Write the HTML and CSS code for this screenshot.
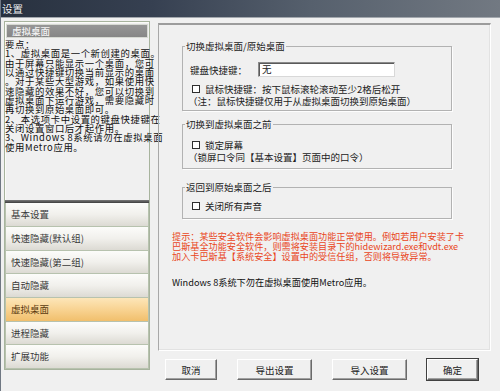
FILE: index.html
```html
<!DOCTYPE html>
<html lang="zh-CN">
<head>
<meta charset="utf-8">
<title>设置</title>
<link rel="stylesheet" href="styles.css">
</head>
<body>
<div class="window">
  <div class="titlebar"><span class="title">设置</span></div>
  <div class="main">
    <div class="side">
      <div class="side-head">虚拟桌面</div>
      <div class="side-text">要点：<br>1、虚拟桌面是一个新创建的桌面。<br>由于屏幕只能显示一个桌面，您可<br>以通过快捷键切换当前显示的桌面<br>。对于某些大型游戏，如果使用快<br>速隐藏的效果不好，您可以切换到<br>虚拟桌面下运行游戏，需要隐藏时<br>再切换到原始桌面即可。<br>2、本选项卡中设置的键盘快捷键在<br>关闭设置窗口后才起作用。<br>3、Windows 8系统请勿在虚拟桌面<br>使用Metro应用。</div>
      <div class="side-sep"></div>
      <ul class="menu">
        <li class="item">基本设置</li>
        <li class="item">快速隐藏(默认组)</li>
        <li class="item">快速隐藏(第二组)</li>
        <li class="item">自动隐藏</li>
        <li class="item active">虚拟桌面</li>
        <li class="item">进程隐藏</li>
        <li class="item">扩展功能</li>
      </ul>
    </div>
    <div class="right">
      <div class="panel">
        <div class="group g1">
          <span class="legend">切换虚拟桌面/原始桌面</span>
          <div class="row-key"><span class="key-label">键盘快捷键：</span><span class="input">无</span></div>
          <div class="row-check"><span class="box"></span><span>鼠标快捷键：按下鼠标滚轮滚动至少2格后松开</span></div>
          <div class="row-note">（注：鼠标快捷键仅用于从虚拟桌面切换到原始桌面）</div>
        </div>
        <div class="group g2">
          <span class="legend">切换到虚拟桌面之前</span>
          <div class="row-check"><span class="box"></span><span>锁定屏幕</span></div>
          <div class="row-note">（锁屏口令同【基本设置】页面中的口令）</div>
        </div>
        <div class="group g3">
          <span class="legend">返回到原始桌面之后</span>
          <div class="row-check"><span class="box"></span><span>关闭所有声音</span></div>
        </div>
        <div class="tip">提示：某些安全软件会影响虚拟桌面功能正常使用。例如若用户安装了卡<br>巴斯基全功能安全软件，则需将安装目录下的hidewizard.exe和vdt.exe<br>加入卡巴斯基【系统安全】设置中的受信任组，否则将导致异常。</div>
        <div class="win8">Windows 8系统下勿在虚拟桌面使用Metro应用。</div>
      </div>
      <div class="buttons">
        <button class="btn w-s">取消</button>
        <button class="btn w-l">导出设置</button>
        <button class="btn w-l">导入设置</button>
        <button class="btn w-s default">确定</button>
      </div>
    </div>
  </div>
</div>
</body>
</html>
```

FILE: styles.css
```css
* { box-sizing: border-box; }
html, body {
  margin: 0;
  padding: 0;
  width: 500px;
  height: 391px;
  overflow: hidden;
  background: #f0f0f0;
  font-family: "Noto Sans CJK SC", "Noto Sans", sans-serif;
  color: #000;
}
.window {
  width: 500px;
  height: 391px;
  border-left: 1px solid #6f7782;
}
.titlebar {
  height: 18px;
  background: linear-gradient(to right, #28313f 0%, #364051 30%, #56606d 62%, #727982 100%);
  border-bottom: 1px solid #a3a8ae;
  display: flex;
  align-items: center;
  padding-left: 1px;
}
.title {
  color: #eef0f2;
  font-size: 10.5px;
  line-height: 12px;
  text-shadow: 0 0 2px #1a2230;
}
.main {
  display: flex;
  gap: 8px;
  padding: 3px 0 0 3px;
}
.side {
  width: 146px;
  height: 349px;
  border: 1px solid #a7b39d;
  box-shadow: inset 1px 1px 0 #fbfbf8;
  display: flex;
  flex-direction: column;
  padding: 1px 0 0 0;
}
.side-head {
  margin: 1px 1px 0 1px;
  height: 14px;
  background: linear-gradient(#969696, #868686);
  border: 1px solid #d6d9d2;
  color: #f4f4f4;
  font-size: 9.5px;
  line-height: 12px;
  padding-left: 5px;
  font-weight: 500;
}
.side-text {
  height: 164px;
  white-space: nowrap;
  overflow: visible;
  font-size: 9.4px;
  line-height: 9.35px;
  padding: 2px 0 0 0;
  letter-spacing: 0.6px;
  color: #111;
}
.side-sep {
  height: 3px;
  background: linear-gradient(#7a7a7a, #3e3e3e);
}
.menu {
  list-style: none;
  margin: 0;
  padding: 0;
}
.item {
  height: 23.7px;
  border: 1px solid #b7c2ae;
  border-top: none;
  background: linear-gradient(#fcfcfa 0%, #f1f0ec 50%, #dcdad3 100%);
  color: #3a3a3a;
  font-size: 9.5px;
  line-height: 22px;
  padding-left: 5px;
}
.item.active {
  background: linear-gradient(#fde6b9 0%, #f8d392 50%, #f1bf6c 100%);
  color: #5a3a10;
}
.right {
  display: flex;
  flex-direction: column;
  padding-top: 2px;
}
.panel {
  width: 333px;
  height: 328px;
  border-top: 2px solid #9c9c9c;
  border-left: 1px solid #a8a8a8;
  border-right: 1px solid #ffffff;
  border-bottom: 1px solid #ffffff;
  box-shadow: inset -1px -1px 0 #e2e2e2;
  padding: 21px 0 0 23px;
  font-size: 9.5px;
}
.group {
  position: relative;
  width: 270px;
  border: 1px solid #b2b2b2;
  box-shadow: 1px 1px 0 #fdfdfd;
  padding-left: 7px;
}
.legend {
  position: absolute;
  top: -7px;
  left: 2px;
  background: #f0f0f0;
  padding: 0 1px;
  font-size: 9.5px;
  line-height: 12px;
  color: #222;
}
.g1 { height: 65px; padding-top: 15px; }
.g2 { height: 45px; padding-top: 14px; margin-top: 13px; }
.g3 { height: 32px; padding-top: 12px; margin-top: 18px; }
.row-key {
  height: 15px;
  display: flex;
  align-items: center;
  color: #222;
}
.key-label {
  width: 68px;
  line-height: 12px;
}
.input {
  width: 137px;
  height: 15px;
  background: #fff;
  border: 1px solid #8a8a8a;
  border-right-color: #d8d8d8;
  border-bottom-color: #d8d8d8;
  box-shadow: inset 1px 1px 0 #5a5a5a;
  padding-left: 3px;
  line-height: 13px;
  font-size: 9.5px;
}
.row-check {
  height: 12px;
  display: flex;
  align-items: center;
  gap: 5px;
  padding-left: 2px;
  line-height: 12px;
  color: #222;
  white-space: nowrap;
}
.g1 .row-check { margin-top: 6px; }
.box {
  width: 8px;
  height: 8px;
  border: 1px solid #2e2e2e;
  background: #fff;
  flex: none;
}
.row-note {
  height: 12px;
  line-height: 12px;
  white-space: nowrap;
  margin-left: -2px;
  color: #222;
}
.tip {
  margin: 13px 0 0 -10px;
  color: #e9461c;
  font-size: 9.15px;
  line-height: 9.8px;
  white-space: nowrap;
}
.win8 {
  margin: 15px 0 0 -10px;
  font-size: 9.2px;
  line-height: 12px;
  white-space: nowrap;
  color: #111;
}
.buttons {
  display: flex;
  gap: 20px;
  margin-top: 8px;
  padding-left: 7px;
}
.btn {
  height: 21px;
  background: #f0f0f0;
  border-top: 1px solid #ffffff;
  border-left: 1px solid #ffffff;
  border-right: 1px solid #6a6a6a;
  border-bottom: 1px solid #6a6a6a;
  box-shadow: inset -1px -1px 0 #a0a0a0;
  font-family: "Noto Sans CJK SC", sans-serif;
  font-size: 9.5px;
  color: #222;
  padding: 0;
  line-height: 18px;
}
.w-s { width: 52px; }
.w-l { width: 75px; }
.btn.default {
  width: 51px;
  outline: 1px solid #404040;
  outline-offset: 0;
}
```
